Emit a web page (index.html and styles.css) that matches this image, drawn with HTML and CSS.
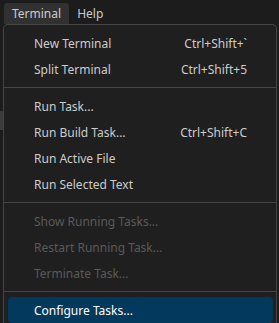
FILE: index.html
```html
<html>
<head><title>Terminal menu</title>
<meta content="text/html;charset=utf-8" http-equiv="Content-Type" />
<link rel="stylesheet" href="styles.css">
</head>
<body>

<div class="menubar">
	<div class="menubar-item active">Terminal</div>
	<div class="menubar-item">Help</div>
</div>

<div class="workbench">
	<div class="gutter"><div class="gutter-mark"></div></div>
	<div class="menu">
		<div class="item"><span class="label">New Terminal</span><span class="keys">Ctrl+Shift+`</span></div>
		<div class="item"><span class="label">Split Terminal</span><span class="keys">Ctrl+Shift+5</span></div>
		<div class="separator"></div>
		<div class="item"><span class="label">Run Task...</span></div>
		<div class="item"><span class="label">Run Build Task...</span><span class="keys">Ctrl+Shift+C</span></div>
		<div class="item"><span class="label">Run Active File</span></div>
		<div class="item"><span class="label">Run Selected Text</span></div>
		<div class="separator"></div>
		<div class="item disabled"><span class="label">Show Running Tasks...</span></div>
		<div class="item disabled"><span class="label">Restart Running Task...</span></div>
		<div class="item disabled"><span class="label">Terminate Task...</span></div>
		<div class="separator"></div>
		<div class="item selected"><span class="label">Configure Tasks...</span></div>
	</div>
</div>

</body>
</html>
```

FILE: styles.css
```css
body{
	padding:0;
	margin:0;
	background-color:#1c1c1c;
	color:#cccccc;
	font-family: "Noto Sans", "Liberation Sans", sans-serif;
	font-size:12px;
	width:279px;
	height:323px;
	overflow:hidden;
}

.menubar{
	display:flex;
	height:24px;
	padding-left:4px;
}

.menubar-item{
	margin-top:3px;
	padding:1px 8px 0 8px;
	line-height:20px;
	border-radius:4px 4px 0 0;
}

.menubar-item.active{
	background-color:#313131;
}

.workbench{
	display:flex;
}

.gutter{
	width:3px;
	padding-top:87px;
}

.gutter-mark{
	height:19px;
	background-color:#3c3c3c;
}

.menu{
	width:274px;
	height:299px;
	overflow:hidden;
	background-color:#1f1f1f;
	border:1px solid #454545;
	border-bottom:0;
	border-radius:5px 5px 0 0;
	padding-top:5px;
	box-sizing:border-box;
}

.item{
	display:flex;
	justify-content:space-between;
	align-items:center;
	height:26px;
	margin:0 3px 0 4px;
	border-radius:4px;
}

.label{
	padding-left:26px;
	white-space:nowrap;
}

.keys{
	padding-right:26px;
	white-space:nowrap;
}

.disabled{
	color:#5a5a5a;
}

.selected{
	background-color:#04395e;
	color:#ffffff;
}

.separator{
	height:1px;
	margin:5px 0;
	background-color:#454545;
}
```
